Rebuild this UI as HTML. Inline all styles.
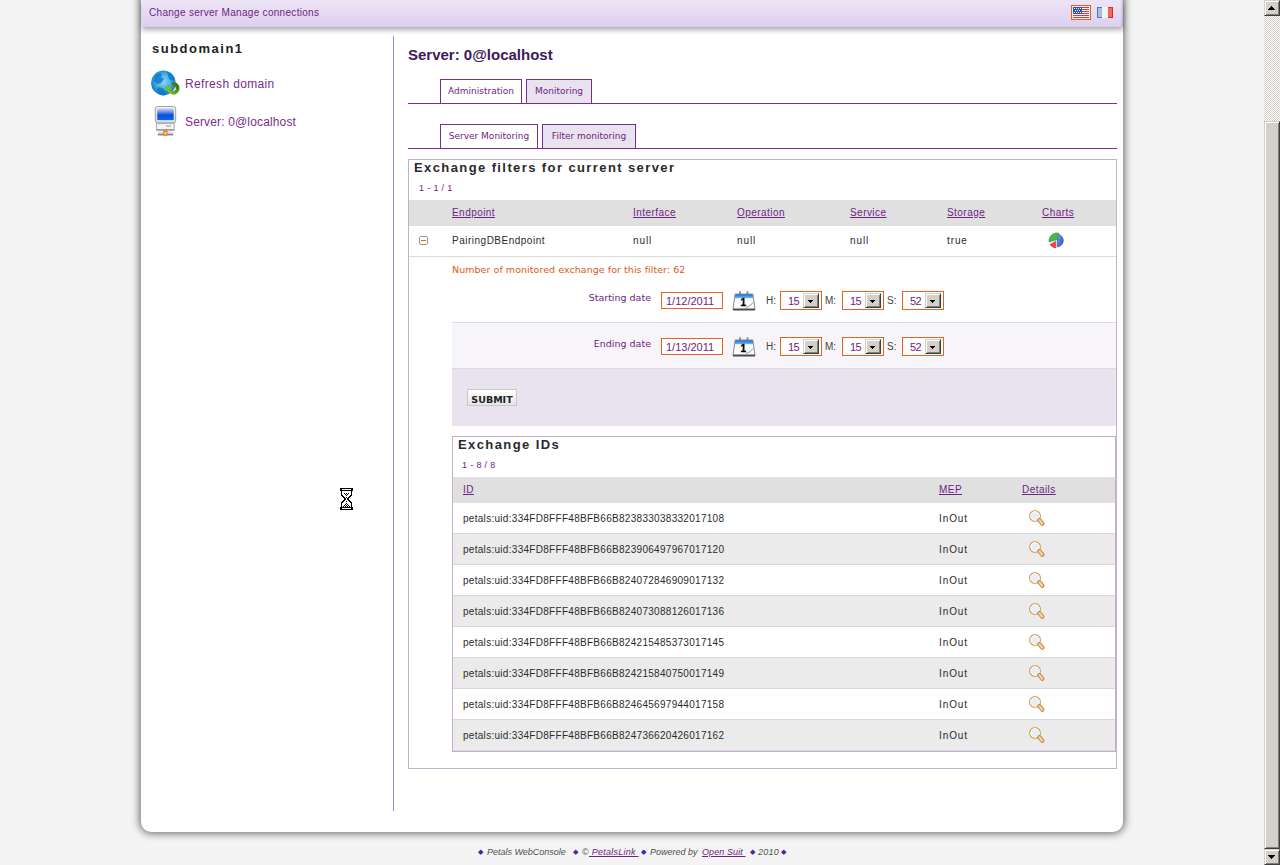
<!DOCTYPE html>
<html lang="en">
<head>
<meta charset="utf-8">
<title>Petals WebConsole</title>
<style>
*{box-sizing:border-box;margin:0;padding:0}
html,body{width:1280px;height:865px;overflow:hidden;background:#f4f4f4;font-family:"Liberation Sans",sans-serif;}
body{position:relative}
.abs{position:absolute}
a{color:#6f2383}
#shell{position:absolute;left:141px;top:-10px;width:982px;height:842px;background:#fff;border-radius:0 0 10px 10px;box-shadow:0 0 9px 1px rgba(0,0,0,.62)}
#topbar{position:absolute;left:142px;top:0;width:981px;height:27px;background:linear-gradient(#eee6f7,#ddceef);box-shadow:0 3px 5px rgba(0,0,0,.33),inset -2px 0 2px -1px rgba(120,80,160,.35)}
#topbar .menu{position:absolute;left:7px;top:7px;font-size:10px;line-height:12px;letter-spacing:.3px;color:#6f2383;white-space:nowrap}
.t{position:absolute;white-space:nowrap}
#side h2{position:absolute;left:152px;top:41px;font-size:13px;line-height:16px;font-weight:bold;letter-spacing:1.5px;color:#222;white-space:nowrap}
.slink{position:absolute;left:185px;font-size:12px;line-height:14px;color:#7a2d8c;letter-spacing:.35px;white-space:nowrap}
#vline{position:absolute;left:393px;top:36px;width:1px;height:775px;background:#a680c4}
h1{position:absolute;left:408px;top:46px;font-size:15px;line-height:18px;font-weight:bold;color:#3c1a59;white-space:nowrap}
.tabline{position:absolute;left:408px;width:709px;height:1px;background:#7a2d8c}
.tab{position:absolute;height:25px;border:1px solid #7a2d8c;border-bottom:none;background:#fff;font-family:"DejaVu Sans","Liberation Sans",sans-serif;font-size:9px;line-height:22px;text-align:center;color:#6f2383;white-space:nowrap}
.tab.on{background:#e9e2ef}
.box{position:absolute;border:1px solid #c3afcf;background:#fff}
.bh{position:absolute;font-size:13px;line-height:16px;font-weight:bold;letter-spacing:1.4px;color:#2a2a2a;white-space:nowrap}
.pg{position:absolute;font-size:9px;line-height:11px;color:#6f2383;letter-spacing:.35px;white-space:nowrap}
.hrow{position:absolute;background:#e0e0e0}
.th{position:absolute;font-size:10px;line-height:12px;color:#6f2383;text-decoration:underline;letter-spacing:.45px;white-space:nowrap}
.td{position:absolute;font-size:10px;line-height:12px;color:#2b2b2b;letter-spacing:.9px;white-space:nowrap}
.hl{position:absolute;height:1px;background:#dcdcdc}
.lbl{position:absolute;font-family:"DejaVu Sans","Liberation Sans",sans-serif;font-size:9.5px;line-height:12px;color:#6f2383;text-align:right;white-space:nowrap}
.inp{position:absolute;width:62px;height:17px;border:1px solid #e2641f;background:#fff;font-size:11px;line-height:17px;color:#6f2383;padding-left:4px;white-space:nowrap}
.hm{position:absolute;font-size:10px;line-height:12px;color:#444;white-space:nowrap}
.sel{position:absolute;width:42px;height:19px;border:1px solid #e2641f;background:#fff;font-size:11px;line-height:19px;color:#6f2383;padding-left:7px;letter-spacing:-.6px}
.sel i{position:absolute;right:2px;top:1px;width:16px;height:15px;background:linear-gradient(#000,#000) 4px 6px/5px 1px no-repeat,linear-gradient(#000,#000) 5px 7px/3px 1px no-repeat,linear-gradient(#000,#000) 6px 8px/1px 1px no-repeat,#d4d0c8;border:1px solid;border-color:#d4d0c8 #404040 #404040 #d4d0c8;box-shadow:inset 1px 1px 0 #fff,inset -1px -1px 0 #808080}
.mag{position:absolute}
.row{position:absolute;left:453px;width:662px;height:31px;border-bottom:1px solid #d9d9d9}
.row.g{background:#ebebeb}
#footer{position:absolute;left:0;top:846px;font-size:9px;line-height:12px;font-style:italic;color:#505050;letter-spacing:.25px;white-space:nowrap}
#footer span,#footer a,#footer b{position:absolute;top:0}
#footer b{font-style:normal;font-weight:normal;color:#4a22b0;font-size:7px;letter-spacing:0;top:0}
#sb{position:absolute;left:1264px;top:0;width:16px;height:865px;background:repeating-conic-gradient(#fff 0 25%,#d4d0c8 0 50%) 0 0/2px 2px}
#sb div{position:absolute;left:0;width:16px;background:#d4d0c8;border:1px solid;border-color:#d4d0c8 #404040 #404040 #d4d0c8;box-shadow:inset 1px 1px 0 #fff,inset -1px -1px 0 #808080}
#sb svg{position:absolute;left:3px}
</style>
</head>
<body>
<svg width="0" height="0" style="position:absolute">
<defs>
<radialGradient id="gGlobe" cx="50%" cy="45%" r="58%"><stop offset="0" stop-color="#8ad6f6"/><stop offset=".5" stop-color="#4fb0e6"/><stop offset=".85" stop-color="#1584d0"/><stop offset="1" stop-color="#0a72bf"/></radialGradient>
<linearGradient id="gGreen" x1="0" y1="1" x2="1" y2="0"><stop offset="0" stop-color="#86c81e"/><stop offset="1" stop-color="#2f6d10"/></linearGradient>
<linearGradient id="gScreen" x1="0" y1="0" x2="0" y2="1"><stop offset="0" stop-color="#c4d2f4"/><stop offset=".3" stop-color="#6f93e6"/><stop offset=".55" stop-color="#0a4fd6"/><stop offset="1" stop-color="#0868f4"/></linearGradient>
<linearGradient id="gMon" x1="0" y1="0" x2="0" y2="1"><stop offset="0" stop-color="#f2f2f2"/><stop offset="1" stop-color="#dcdcdc"/></linearGradient>
<linearGradient id="gCalB" x1="0" y1="0" x2="0" y2="1"><stop offset="0" stop-color="#1a66c8"/><stop offset="1" stop-color="#6cc0ee"/></linearGradient>
<linearGradient id="gBlueP" x1="0" y1="0" x2="1" y2="1"><stop offset="0" stop-color="#7aa4ea"/><stop offset="1" stop-color="#1c4fb8"/></linearGradient>
<symbol id="mag" viewBox="0 0 17 17"><circle cx="7" cy="7" r="5.4" fill="#e6eefa" stroke="#d8a458" stroke-width="1.3"/><circle cx="7" cy="7" r="4.3" fill="none" stroke="#fff" stroke-width=".8"/><path d="M11.4 11.2l2.9 3.5" stroke="#c67c3c" stroke-width="4.2" stroke-linecap="round"/><path d="M11.5 11.3l2.7 3.3" stroke="#ecd598" stroke-width="2.6" stroke-linecap="round"/></symbol>
<symbol id="cal" viewBox="0 0 24 22"><path d="M8 1.2v3.6M15.5 1.2v3.6" stroke="#8c948c" stroke-width="1.9"/><path d="M3.2 4h17.6l2.2 15.2q.1.8-.8.8H1.8q-.9 0-.8-.8z" fill="#fdfdfd" stroke="#7a7a7a" stroke-width=".9"/><path d="M3.3 4.2h17.4l.5 4H2.8z" fill="url(#gCalB)"/><path d="M1.2 18.6h21.6l.2 1.6H1z" fill="#4a4a4a"/><path d="M14 17.5q5-1.5 7-5" stroke="#888" stroke-width=".9" fill="none"/><text x="11.3" y="15.6" font-family="Liberation Sans, sans-serif" font-weight="bold" font-size="10" text-anchor="middle" fill="#000" stroke="#000" stroke-width=".3">1</text></symbol>
</defs></svg>
<div id="shell"></div>
<div id="topbar"><div class="menu">Change server Manage connections</div></div>

<svg class="abs" style="left:1071px;top:5px" width="20" height="15" viewBox="0 0 20 15" shape-rendering="crispEdges"><rect x=".5" y=".5" width="19" height="14" fill="#f2e8f4" stroke="#e0621e"/><rect x="2" y="2" width="16" height="11" fill="#fff"/><path d="M2 2.5h16M2 4.5h16M2 6.5h16M2 8.5h16M2 10.5h16M2 12.5h16" stroke="#ee3030" stroke-width="1"/><rect x="2" y="2" width="9" height="7" fill="#2a52c8"/><path d="M3 3.5h7M3 7.5h7" stroke="#fff" stroke-width="1" stroke-dasharray="1 1"/><path d="M4 5.5h6" stroke="#fff" stroke-width="1" stroke-dasharray="1 1"/></svg>
<svg class="abs" style="left:1097px;top:7px" width="16" height="11" viewBox="0 0 16 11" shape-rendering="crispEdges"><rect width="5" height="11" fill="#4a78c8"/><rect x="5" width="6" height="11" fill="#f2f2f2"/><rect x="11" width="5" height="11" fill="#e02a20"/><rect x="1" y="1" width="4" height="9" fill="#a8bde4"/><rect x="11" y="1" width="4" height="9" fill="#ec6a5a"/></svg>
<div id="side">
<h2>subdomain1</h2>
<svg class="abs" style="left:150px;top:69px" width="31" height="29" viewBox="0 0 31 29"><circle cx="13.4" cy="13.9" r="12.3" fill="url(#gGlobe)"/><path d="M5 7l4-3 3 1-1 3 3 2-3 4-4 1-3-3zM17 3l5 2 3 5-3 2-3-2-1-4zM8 18l5 1 3 4-2 4-5-2-2-4z" fill="#0b78c6" opacity=".8"/><path d="M21.9 15.2A4.4 4.4 0 1 1 19 20.6" fill="none" stroke="url(#gGreen)" stroke-width="3.7"/><path d="M13.2 20.8L18 15.7l4.4 5.1z" fill="#7cc01c"/></svg>
<svg class="abs" style="left:154px;top:105px" width="23" height="32" viewBox="0 0 23 32"><rect x="1.3" y="1.5" width="20.4" height="16.4" rx="2.2" fill="url(#gMon)" stroke="#9a9a9a" stroke-width=".9"/><rect x="3.3" y="3.5" width="16.4" height="11.6" fill="url(#gScreen)"/><rect x="2.6" y="18.6" width="17.6" height="6.2" fill="#f4f4f4" stroke="#a8a8a8" stroke-width=".9"/><path d="M2.4 25h18" stroke="#777" stroke-width="1"/><path d="M12 21h5" stroke="#b8bcd8" stroke-width="1.6"/><rect x="10.4" y="25" width="2.2" height="2" fill="#8aa0c8"/><rect x="3.8" y="26.7" width="15.4" height="3.3" fill="#c9cbd6"/><path d="M3.8 27.2h15.4" stroke="#e6e7ee" stroke-width="1"/><path d="M3.8 29.8h15.4" stroke="#5e5e66" stroke-width="1"/><rect x="9.2" y="25.8" width="4.3" height="4.9" rx=".6" fill="#ee7410"/><rect x="10.1" y="26.8" width="2.5" height="2.9" fill="#ffc83c"/></svg>
<div class="slink" style="top:77px">Refresh domain</div>
<div class="slink" style="top:115px;letter-spacing:.15px">Server: 0@localhost</div>
</div>
<svg class="abs" style="left:340px;top:488px" width="13" height="22" viewBox="0 0 13 22" shape-rendering="crispEdges"><path d="M1 0h11v22H1z M1 3h11v4l-4 4 4 4v4H1v-4l4-4-4-4z" fill="#fff" fill-rule="nonzero"/><path d="M0 0h13v1h-13zM0 1h2v1h-2zM11 1h2v1h-2zM0 2h13v1h-13zM1 3h1v1h-1zM11 3h1v1h-1zM1 4h1v1h-1zM11 4h1v1h-1zM1 5h1v1h-1zM4 5h1v1h-1zM6 5h1v1h-1zM8 5h1v1h-1zM11 5h1v1h-1zM1 6h1v1h-1zM5 6h1v1h-1zM7 6h1v1h-1zM11 6h1v1h-1zM1 7h2v1h-2zM6 7h1v1h-1zM10 7h2v1h-2zM2 8h2v1h-2zM9 8h2v1h-2zM3 9h2v1h-2zM6 9h1v1h-1zM8 9h2v1h-2zM4 10h2v1h-2zM7 10h2v1h-2zM4 11h2v1h-2zM7 11h2v1h-2zM3 12h2v1h-2zM8 12h2v1h-2zM2 13h2v1h-2zM6 13h1v1h-1zM9 13h2v1h-2zM1 14h2v1h-2zM10 14h2v1h-2zM1 15h1v1h-1zM6 15h1v1h-1zM11 15h1v1h-1zM1 16h1v1h-1zM5 16h1v1h-1zM7 16h1v1h-1zM11 16h1v1h-1zM1 17h1v1h-1zM4 17h1v1h-1zM6 17h1v1h-1zM8 17h1v1h-1zM11 17h1v1h-1zM1 18h1v1h-1zM3 18h1v1h-1zM5 18h1v1h-1zM7 18h1v1h-1zM9 18h1v1h-1zM11 18h1v1h-1zM0 19h13v1h-13zM0 20h2v1h-2zM11 20h2v1h-2zM0 21h13v1h-13z" fill="#000"/></svg>
<div id="vline"></div>

<h1>Server: 0@localhost</h1>
<div class="tab" style="left:440px;top:79px;width:82px">Administration</div>
<div class="tab on" style="left:526px;top:79px;width:66px">Monitoring</div>
<div class="tabline" style="top:103px"></div>
<div class="tab" style="left:440px;top:124px;width:98px">Server Monitoring</div>
<div class="tab on" style="left:542px;top:124px;width:94px">Filter monitoring</div>
<div class="tabline" style="top:148px"></div>

<div class="box" style="left:408px;top:159px;width:709px;height:610px"></div>
<div class="bh" style="left:414px;top:160px">Exchange filters for current server</div>
<div class="pg" style="left:419px;top:183px">1 - 1 / 1</div>
<div class="hrow" style="left:409px;top:200px;width:707px;height:26px"></div>
<div class="th" style="left:452px;top:207px">Endpoint</div>
<div class="th" style="left:633px;top:207px">Interface</div>
<div class="th" style="left:737px;top:207px">Operation</div>
<div class="th" style="left:850px;top:207px">Service</div>
<div class="th" style="left:947px;top:207px">Storage</div>
<div class="th" style="left:1042px;top:207px">Charts</div>
<div class="td" style="left:452px;top:235px;letter-spacing:.5px">PairingDBEndpoint</div>
<div class="td" style="left:633px;top:235px">null</div>
<div class="td" style="left:737px;top:235px">null</div>
<div class="td" style="left:850px;top:235px">null</div>
<div class="td" style="left:947px;top:235px">true</div>
<svg class="abs" style="left:419px;top:236px" width="9" height="9" viewBox="0 0 9 9" shape-rendering="crispEdges"><rect x=".5" y=".5" width="8" height="8" fill="#fdfdfd" stroke="#999"/><rect x="0" y="0" width="1" height="1" fill="#fff"/><rect x="8" y="0" width="1" height="1" fill="#fff"/><rect x="0" y="8" width="1" height="1" fill="#fff"/><rect x="8" y="8" width="1" height="1" fill="#fff"/><rect x="2" y="4" width="5" height="1" fill="#e8601a"/></svg>
<svg class="abs" style="left:1048px;top:232px" width="18" height="18" viewBox="0 0 18 18"><path d="M9.3 2.1A6.8 6.5 0 0 1 9.3 15z" fill="url(#gBlueP)" stroke="#2656b8" stroke-width=".7"/><path d="M8.9 7.7L11 1.3A7.8 7.8 0 0 0 1.1 10z" fill="#45b856" stroke="#3a9a48" stroke-width=".7"/><path d="M7.8 9.4L2 12.4A7.4 7.4 0 0 0 7.8 16z" fill="#f04848" stroke="#e42424" stroke-width=".6"/></svg>
<div class="hl" style="left:409px;top:256px;width:707px"></div>

<div class="t" style="left:452px;top:264px;font-family:'DejaVu Sans',sans-serif;font-size:9.5px;line-height:12px;letter-spacing:.05px;color:#dc5a1c">Number of monitored exchange for this filter: 62</div>

<div class="lbl" style="left:551px;width:100px;top:292px">Starting date</div>
<div class="inp" style="left:661px;top:292px">1/12/2011</div>
<svg class="abs" style="left:732px;top:290px" width="24" height="22"><use href="#cal"/></svg>
<div class="hm" style="left:766px;top:295px">H:</div>
<div class="sel" style="left:780px;top:291px">15<i></i></div>
<div class="hm" style="left:825px;top:295px">M:</div>
<div class="sel" style="left:842px;top:291px">15<i></i></div>
<div class="hm" style="left:887px;top:295px">S:</div>
<div class="sel" style="left:902px;top:291px">52<i></i></div>
<div class="hl" style="left:452px;top:322px;width:664px"></div>
<div class="abs" style="left:452px;top:323px;width:664px;height:45px;background:#f7f5f9"></div>
<div class="hl" style="left:452px;top:368px;width:664px"></div>
<div class="lbl" style="left:551px;width:100px;top:338px">Ending date</div>
<div class="inp" style="left:661px;top:338px">1/13/2011</div>
<svg class="abs" style="left:732px;top:336px" width="24" height="22"><use href="#cal"/></svg>
<div class="hm" style="left:766px;top:341px">H:</div>
<div class="sel" style="left:780px;top:337px">15<i></i></div>
<div class="hm" style="left:825px;top:341px">M:</div>
<div class="sel" style="left:842px;top:337px">15<i></i></div>
<div class="hm" style="left:887px;top:341px">S:</div>
<div class="sel" style="left:902px;top:337px">52<i></i></div>
<div class="abs" style="left:452px;top:369px;width:664px;height:57px;background:#e9e3ef"></div>
<div class="abs" style="left:467px;top:389px;width:50px;height:17px;border:1px solid #c8c8c8;background:linear-gradient(#fff,#e4e4e4);font-family:'DejaVu Sans',sans-serif;font-weight:bold;font-size:9.5px;line-height:20px;text-align:center;color:#222">SUBMIT</div>

<div class="box" style="left:452px;top:436px;width:664px;height:316px"></div>
<div class="bh" style="left:458px;top:437px">Exchange IDs</div>
<div class="pg" style="left:462px;top:460px">1 - 8 / 8</div>
<div class="hrow" style="left:453px;top:477px;width:662px;height:26px"></div>
<div class="th" style="left:463px;top:484px">ID</div>
<div class="th" style="left:939px;top:484px">MEP</div>
<div class="th" style="left:1022px;top:484px">Details</div>

<!--ROWS-->
<div class="row" style="top:503px"><span class="td" style="left:10px;top:10px;letter-spacing:.29px">petals:uid:334FD8FFF48BFB66B823833038332017108</span><span class="td" style="left:486px;top:10px">InOut</span><svg class="mag" style="left:575px;top:6px" width="17" height="17" viewBox="0 0 17 17"><use href="#mag"/></svg></div>
<div class="row g" style="top:534px"><span class="td" style="left:10px;top:10px;letter-spacing:.29px">petals:uid:334FD8FFF48BFB66B823906497967017120</span><span class="td" style="left:486px;top:10px">InOut</span><svg class="mag" style="left:575px;top:6px" width="17" height="17" viewBox="0 0 17 17"><use href="#mag"/></svg></div>
<div class="row" style="top:565px"><span class="td" style="left:10px;top:10px;letter-spacing:.29px">petals:uid:334FD8FFF48BFB66B824072846909017132</span><span class="td" style="left:486px;top:10px">InOut</span><svg class="mag" style="left:575px;top:6px" width="17" height="17" viewBox="0 0 17 17"><use href="#mag"/></svg></div>
<div class="row g" style="top:596px"><span class="td" style="left:10px;top:10px;letter-spacing:.29px">petals:uid:334FD8FFF48BFB66B824073088126017136</span><span class="td" style="left:486px;top:10px">InOut</span><svg class="mag" style="left:575px;top:6px" width="17" height="17" viewBox="0 0 17 17"><use href="#mag"/></svg></div>
<div class="row" style="top:627px"><span class="td" style="left:10px;top:10px;letter-spacing:.29px">petals:uid:334FD8FFF48BFB66B824215485373017145</span><span class="td" style="left:486px;top:10px">InOut</span><svg class="mag" style="left:575px;top:6px" width="17" height="17" viewBox="0 0 17 17"><use href="#mag"/></svg></div>
<div class="row g" style="top:658px"><span class="td" style="left:10px;top:10px;letter-spacing:.29px">petals:uid:334FD8FFF48BFB66B824215840750017149</span><span class="td" style="left:486px;top:10px">InOut</span><svg class="mag" style="left:575px;top:6px" width="17" height="17" viewBox="0 0 17 17"><use href="#mag"/></svg></div>
<div class="row" style="top:689px"><span class="td" style="left:10px;top:10px;letter-spacing:.29px">petals:uid:334FD8FFF48BFB66B824645697944017158</span><span class="td" style="left:486px;top:10px">InOut</span><svg class="mag" style="left:575px;top:6px" width="17" height="17" viewBox="0 0 17 17"><use href="#mag"/></svg></div>
<div class="row g" style="top:720px"><span class="td" style="left:10px;top:10px;letter-spacing:.29px">petals:uid:334FD8FFF48BFB66B824736620426017162</span><span class="td" style="left:486px;top:10px">InOut</span><svg class="mag" style="left:575px;top:6px" width="17" height="17" viewBox="0 0 17 17"><use href="#mag"/></svg></div>
<!--/ROWS-->
<div id="footer">
<b style="left:478px">◆</b><span style="left:487px;letter-spacing:0">Petals WebConsole</span>
<b style="left:573px">◆</b><span style="left:582px;font-style:normal">©</span><a href="#" style="left:589px">&nbsp;PetalsLink&nbsp;</a>
<b style="left:641px">◆</b><span style="left:650px;letter-spacing:0">Powered by</span><a href="#" style="left:702px;letter-spacing:.1px">Open Suit&nbsp;</a>
<b style="left:750px">◆</b><span style="left:758px">2010</span>
<b style="left:781px">◆</b>
</div>
<div id="sb"><div style="top:0;height:16px"><svg style="top:5px" width="7" height="4" viewBox="0 0 7 4" shape-rendering="crispEdges"><path d="M3 0h1v1h1v1h1v1h1v1H0V3h1V2h1V1h1z" fill="#000"/></svg></div><div style="top:121px;height:728px"></div><div style="top:849px;height:16px"><svg style="top:5px" width="7" height="4" viewBox="0 0 7 4" shape-rendering="crispEdges"><path d="M0 0h7v1H6v1H5v1H4v1H3V3H2V2H1V1H0z" fill="#000"/></svg></div></div>
</body>
</html>
